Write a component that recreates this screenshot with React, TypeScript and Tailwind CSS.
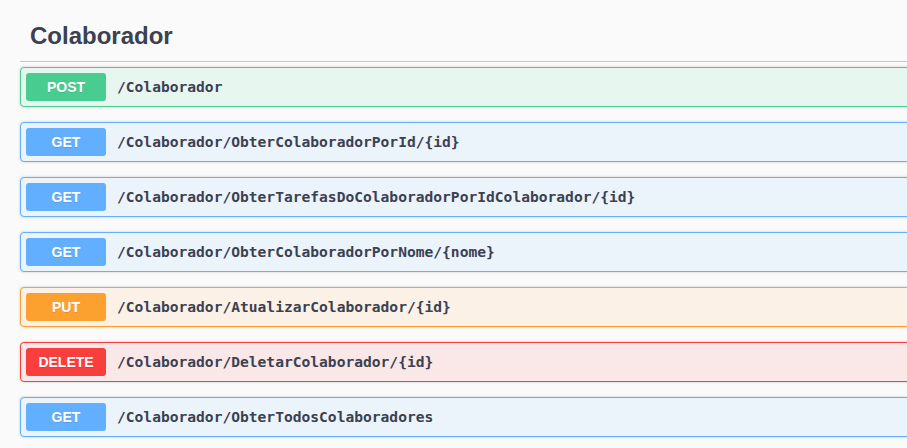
import React from "react";

type Op = { method: string; path: string };

const ops: Op[] = [
  { method: "POST", path: "/Colaborador" },
  { method: "GET", path: "/Colaborador/ObterColaboradorPorId/{id}" },
  { method: "GET", path: "/Colaborador/ObterTarefasDoColaboradorPorIdColaborador/{id}" },
  { method: "GET", path: "/Colaborador/ObterColaboradorPorNome/{nome}" },
  { method: "PUT", path: "/Colaborador/AtualizarColaborador/{id}" },
  { method: "DELETE", path: "/Colaborador/DeletarColaborador/{id}" },
  { method: "GET", path: "/Colaborador/ObterTodosColaboradores" },
];

const styles: Record<string, { card: string; badge: string }> = {
  POST: { card: "border-[#49cc90] bg-[#e8f6f0]", badge: "bg-[#49cc90]" },
  GET: { card: "border-[#61affe] bg-[#ebf3fb]", badge: "bg-[#61affe]" },
  PUT: { card: "border-[#fca130] bg-[#fbf1e6]", badge: "bg-[#fca130]" },
  DELETE: { card: "border-[#f93e3e] bg-[#fae7e7]", badge: "bg-[#f93e3e]" },
};

export default function App() {
  return (
    <div className="w-[907px] h-[448px] overflow-hidden bg-[#fafafa]">
      <div className="w-[1200px] px-5">
        <h3
          className="pt-[22px] pb-[11px] pl-[10px] text-[24px] leading-[28px] font-bold text-[#3b4151] border-b border-[#c4c6cb] mb-[5px]"
          style={{ fontFamily: '"Liberation Sans", Arial, sans-serif' }}
        >
          Colaborador
        </h3>
        <div className="flex flex-col gap-[15px]">
          {ops.map((op, i) => (
            <div
              key={i}
              className={`flex items-center h-[40px] p-[5px] border rounded-[4px] shadow-[0_0_3px_rgba(0,0,0,0.19)] ${styles[op.method].card}`}
            >
              <div
                className={`w-[80px] h-[28px] rounded-[3px] flex items-center justify-center text-white text-[14px] font-bold [text-shadow:0_1px_0_rgba(0,0,0,0.1)] ${styles[op.method].badge}`}
                style={{ fontFamily: '"Liberation Sans", Arial, sans-serif' }}
              >
                {op.method}
              </div>
              <span
                className="pl-[11px] text-[14.6px] font-bold text-[#3b4151]"
                style={{ fontFamily: '"DejaVu Sans Mono", monospace' }}
              >
                {op.path}
              </span>
            </div>
          ))}
        </div>
      </div>
    </div>
  );
}
